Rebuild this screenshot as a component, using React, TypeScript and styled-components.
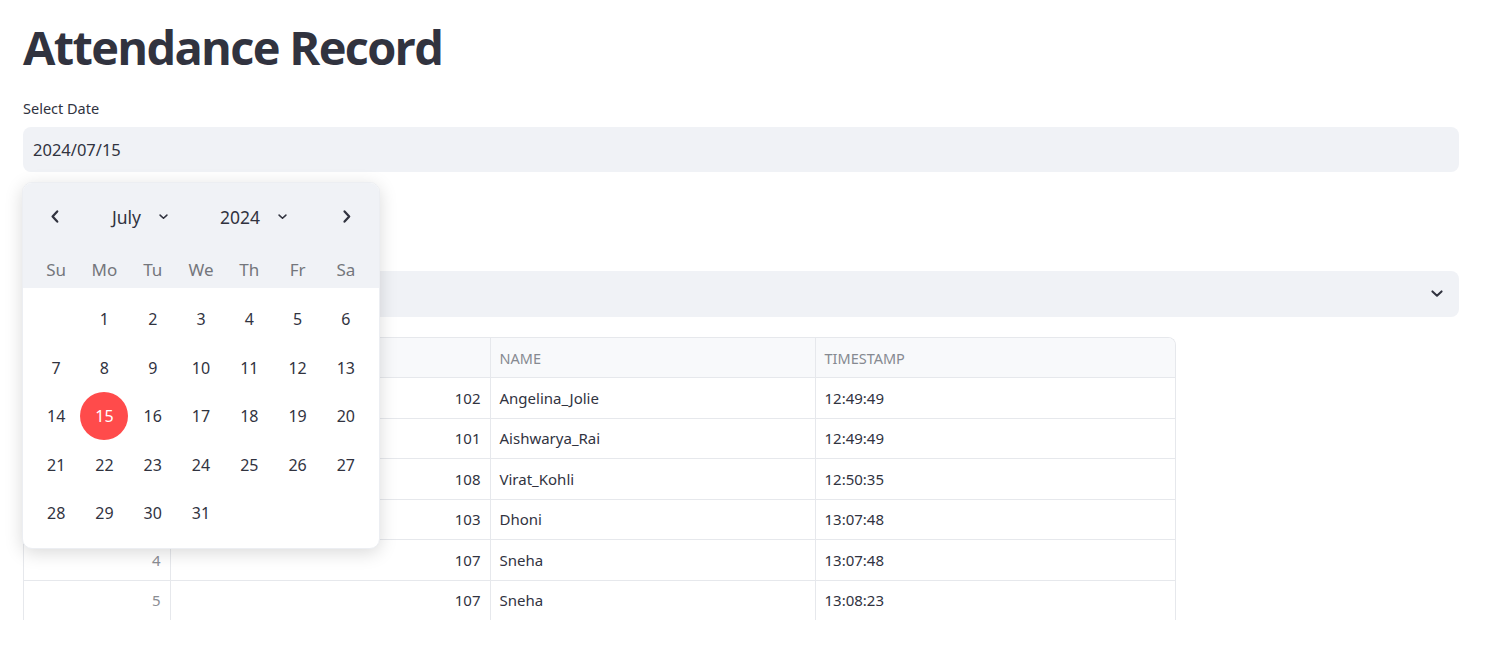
import styled, { createGlobalStyle } from 'styled-components';

const GlobalStyle = createGlobalStyle`
  html, body {
    margin: 0;
    padding: 0;
    background: #ffffff;
  }
  body {
    font-family: 'Noto Sans', 'Open Sans', sans-serif;
    color: #31333f;
  }
`;

const Page = styled.div`
  width: 1497px;
  height: 648px;
  overflow: hidden;
  box-sizing: border-box;
  padding: 0 38px 0 23px;
`;

const Main = styled.main`
  display: flex;
  flex-direction: column;
`;

const Title = styled.h1`
  margin: 0;
  padding-top: 18px;
  height: 96px;
  box-sizing: border-box;
  font-family: 'Open Sans', sans-serif;
  font-weight: 700;
  font-size: 47px;
  line-height: 58px;
  letter-spacing: -1.7px;
  color: #31333f;
`;

const Label = styled.label`
  display: block;
  font-size: 14.5px;
  line-height: 20px;
  height: 20px;
  margin: 2px 0 9px;
  color: #31333f;
`;

const Field = styled.div`
  position: relative;
`;

const InputBox = styled.div`
  height: 45px;
  border-radius: 8px;
  background: #f0f2f6;
  display: flex;
  align-items: center;
  justify-content: space-between;
  padding: 0 16px 0 10px;
  font-size: 16.5px;
  color: #31333f;
`;

const Spacer = styled.div<{ $h: number }>`
  height: ${(p) => p.$h}px;
`;

/* date popover */
const Popover = styled.div`
  position: absolute;
  top: 55px;
  left: -1px;
  width: 358px;
  z-index: 10;
  background: #ffffff;
  border-radius: 10px;
  overflow: hidden;
  box-shadow: 0 4px 18px rgba(0, 0, 0, 0.15);
  border: 1px solid #eceef2;
  box-sizing: border-box;
`;

const CalHead = styled.div`
  background: #f0f2f6;
`;

const NavRow = styled.div`
  height: 67px;
  display: flex;
  align-items: center;
  justify-content: space-between;
  padding: 0 26px 0 26px;
`;

const NavBtn = styled.button`
  border: 0;
  background: none;
  padding: 0;
  width: 12px;
  height: 16px;
  display: flex;
  align-items: center;
  justify-content: center;
  color: #31333f;
`;

const Selects = styled.div`
  display: flex;
  align-items: center;
  gap: 52px;
  margin-right: 3px;
`;

const MonthSelect = styled.div`
  display: flex;
  align-items: center;
  gap: 18px;
  font-size: 17.5px;
  color: #31333f;
`;

const Grid = styled.div`
  display: grid;
  grid-template-columns: repeat(7, 1fr);
  padding: 0 9px 0 9px;
`;

const WeekRow = styled(Grid)`
  height: 38px;
  align-items: center;
`;

const WeekDay = styled.div`
  text-align: center;
  font-size: 17px;
  color: #74767c;
`;

const Days = styled(Grid)`
  padding-top: 7px;
  padding-bottom: 10px;
  grid-auto-rows: 48.5px;
`;

const Day = styled.div<{ $selected?: boolean }>`
  display: flex;
  align-items: center;
  justify-content: center;
  font-size: 16px;
  color: ${(p) => (p.$selected ? '#ffffff' : '#31333f')};
  position: relative;
  z-index: 0;
  &::before {
    content: '';
    display: ${(p) => (p.$selected ? 'block' : 'none')};
    position: absolute;
    width: 48px;
    height: 48px;
    border-radius: 50%;
    background: #ff4b4b;
    z-index: -1;
  }
`;

/* select */
const SelectBox = styled(InputBox)`
  height: 46px;
`;

/* table */
const TableWrap = styled.div`
  width: 1153px;
  height: 283px;
  overflow: hidden;
  border: 1px solid #e6e8ec;
  border-bottom: 0;
  border-radius: 8px 8px 0 0;
  box-sizing: border-box;
`;

const Table = styled.table`
  border-collapse: collapse;
  width: 100%;
  table-layout: fixed;
  font-size: 15px;
`;

const Th = styled.th`
  height: 39px;
  background: #f8f9fb;
  border-bottom: 1px solid #e6e8ec;
  border-left: 1px solid #e6e8ec;
  text-align: left;
  padding: 0 9px;
  font-weight: 400;
  font-size: 14.5px;
  color: #868991;
  &:first-child {
    border-left: 0;
  }
`;

const Td = styled.td<{ $align?: 'left' | 'right'; $muted?: boolean }>`
  height: 39.5px;
  padding: 0 9px;
  border-bottom: 1px solid #e6e8ec;
  border-left: 1px solid #e6e8ec;
  text-align: ${(p) => p.$align || 'left'};
  color: ${(p) => (p.$muted ? '#8a8d93' : '#31333f')};
  &:first-child {
    border-left: 0;
  }
`;

const Chevron = ({ dir, size = 12 }: { dir: 'left' | 'right'; size?: number }) => (
  <svg width={size * 0.6} height={size} viewBox="0 0 8 14" fill="none">
    <path
      d={dir === 'left' ? 'M6.5 1.5 L1.5 7 L6.5 12.5' : 'M1.5 1.5 L6.5 7 L1.5 12.5'}
      stroke="currentColor"
      strokeWidth="2.4"
      strokeLinecap="round"
      strokeLinejoin="round"
    />
  </svg>
);

const ChevronDown = ({ w = 9, color = '#31333f' }: { w?: number; color?: string }) => (
  <svg width={w} height={w * 0.6} viewBox="0 0 10 6" fill="none">
    <path d="M1.2 1.2 L5 4.8 L8.8 1.2" stroke={color} strokeWidth="1.7" strokeLinecap="round" strokeLinejoin="round" />
  </svg>
);

const weekDays = ['Su', 'Mo', 'Tu', 'We', 'Th', 'Fr', 'Sa'];

const rows = [
  { id: 102, name: 'Angelina_Jolie', time: '12:49:49' },
  { id: 101, name: 'Aishwarya_Rai', time: '12:49:49' },
  { id: 108, name: 'Virat_Kohli', time: '12:50:35' },
  { id: 103, name: 'Dhoni', time: '13:07:48' },
  { id: 107, name: 'Sneha', time: '13:07:48' },
  { id: 107, name: 'Sneha', time: '13:08:23' },
];

export default function App() {
  const cells: (number | null)[] = [null, ...Array.from({ length: 31 }, (_, i) => i + 1)];

  return (
    <Page>
      <GlobalStyle />
      <Main>
        <Title>Attendance Record</Title>

        <Label>Select Date</Label>
        <Field>
          <InputBox>2024/07/15</InputBox>
          <Popover>
            <CalHead>
              <NavRow>
                <NavBtn>
                  <Chevron dir="left" size={13} />
                </NavBtn>
                <Selects>
                  <MonthSelect>
                    July
                    <ChevronDown />
                  </MonthSelect>
                  <MonthSelect>
                    2024
                    <ChevronDown />
                  </MonthSelect>
                </Selects>
                <NavBtn>
                  <Chevron dir="right" size={13} />
                </NavBtn>
              </NavRow>
              <WeekRow>
                {weekDays.map((d) => (
                  <WeekDay key={d}>{d}</WeekDay>
                ))}
              </WeekRow>
            </CalHead>
            <Days>
              {cells.map((d, i) => (
                <Day key={i} $selected={d === 15}>
                  {d ?? ''}
                </Day>
              ))}
            </Days>
          </Popover>
        </Field>

        <Spacer $h={68} />
        <Label>Select Name</Label>
        <SelectBox>
          <span />
          <ChevronDown w={12} />
        </SelectBox>

        <Spacer $h={20} />
        <TableWrap>
          <Table>
            <colgroup>
              <col style={{ width: 146 }} />
              <col style={{ width: 320 }} />
              <col style={{ width: 325 }} />
              <col />
            </colgroup>
            <thead>
              <tr>
                <Th />
                <Th>ID</Th>
                <Th>NAME</Th>
                <Th>TIMESTAMP</Th>
              </tr>
            </thead>
            <tbody>
              {rows.map((r, i) => (
                <tr key={i}>
                  <Td $align="right" $muted>
                    {i}
                  </Td>
                  <Td $align="right">{r.id}</Td>
                  <Td>{r.name}</Td>
                  <Td>{r.time}</Td>
                </tr>
              ))}
            </tbody>
          </Table>
        </TableWrap>
      </Main>
    </Page>
  );
}
